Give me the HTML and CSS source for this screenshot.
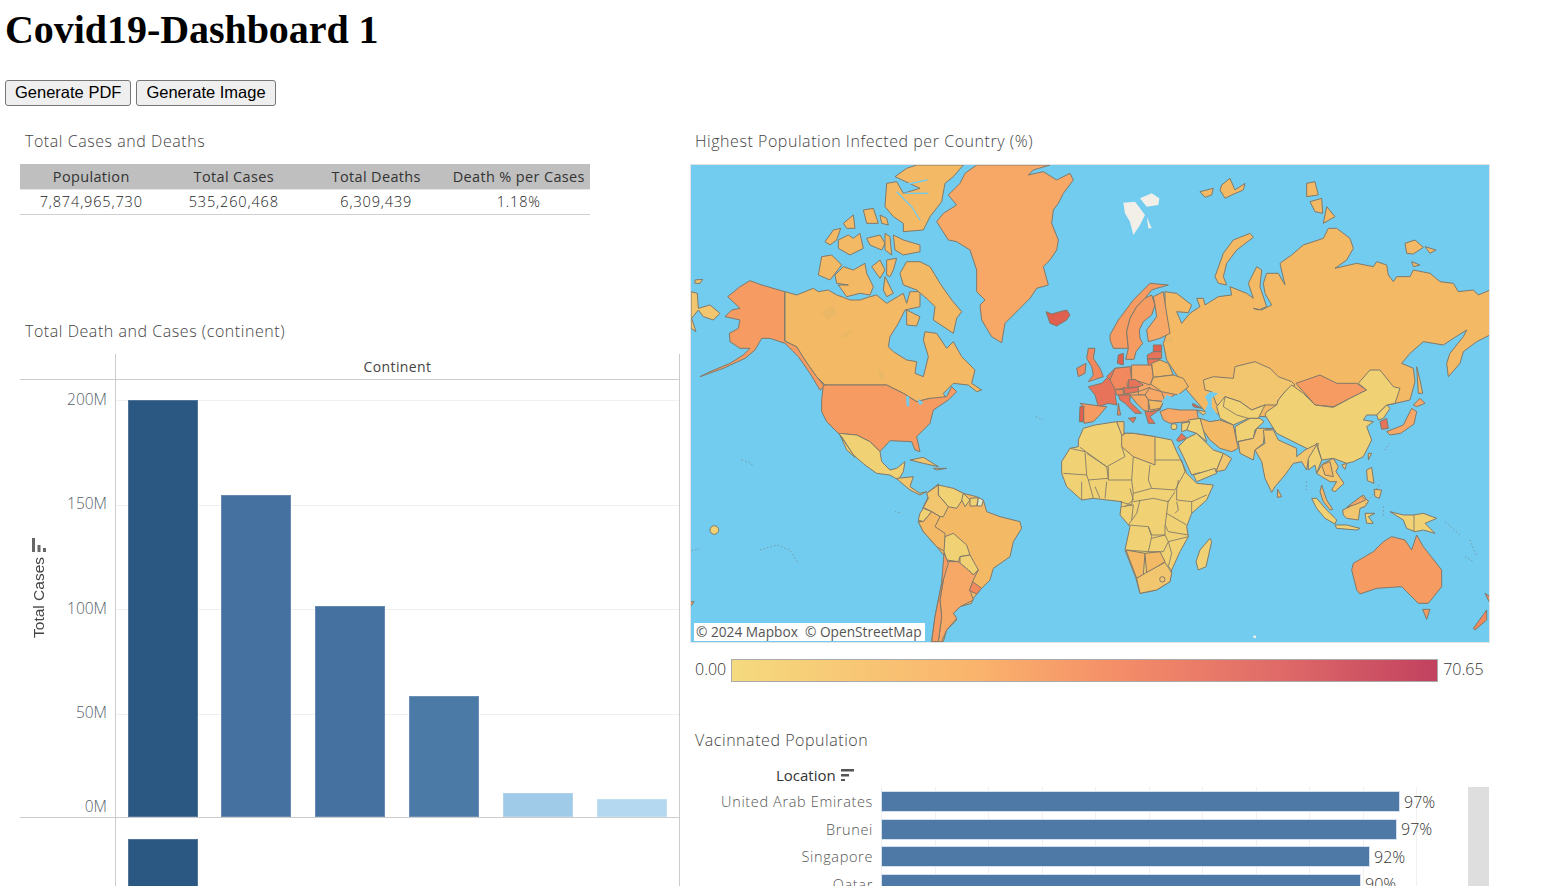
FILE: index.html
```html
<!DOCTYPE html>
<html lang="en">
<head>
<meta charset="utf-8">
<title>Covid19-Dashboard 1</title>
<link rel="stylesheet" href="styles.css">
</head>
<body>
<h1 class="page-title">Covid19-Dashboard 1</h1>
<div class="actions">
  <button class="btn" type="button">Generate PDF</button>
  <button class="btn" type="button">Generate Image</button>
</div>
<main class="dash">
  <section class="col-left">
    <h2 class="viz-title">Total Cases and Deaths</h2>
    <div class="kpi">
      <div class="kpi-row kpi-head"><span>Population</span><span>Total Cases</span><span>Total Deaths</span><span>Death % per Cases</span></div>
      <div class="kpi-row kpi-body"><span>7,874,965,730</span><span>535,260,468</span><span>6,309,439</span><span>1.18%</span></div>
    </div>
    <h2 class="viz-title title-chart">Total Death and Cases (continent)</h2>
    <div class="chart">
      <div class="chart-head"><div class="corner"></div><div class="continent">Continent</div></div>
      <div class="chart-row">
        <div class="axis">
          <div class="axis-title">
            <svg class="sort-v" viewBox="0 0 14 14" width="14" height="14"><rect x="0" y="0" width="3" height="14"/><rect x="5.500" y="7" width="3" height="7"/><rect x="11" y="10" width="3" height="4"/></svg>
            <span class="axis-label">Total Cases</span>
          </div>
          <div class="ticks">
            <div class="tick">200M</div><div class="tick">150M</div><div class="tick">100M</div><div class="tick">50M</div><div class="tick tick-zero">0M</div>
          </div>
        </div>
        <div class="plot">
          <div class="bar b-dark" style="height:417px"></div>
          <div class="bar b-mid" style="height:322px"></div>
          <div class="bar b-mid" style="height:211px"></div>
          <div class="bar b-mid2" style="height:121px"></div>
          <div class="bar b-light" style="height:24px"></div>
          <div class="bar b-light2" style="height:18px"></div>
        </div>
      </div>
      <div class="chart-row2">
        <div class="corner"></div>
        <div class="plot2"><div class="bar b-dark bar-tall"></div></div>
      </div>
    </div>
  </section>
  <section class="col-right">
    <h2 class="viz-title">Highest Population Infected per Country (%)</h2>
    <div class="map">
      <svg class="map-svg" viewBox="691 165 798 477" width="798" height="477" aria-label="World map">
        <!-- North Atlantic / Arctic -->
        <g transform="translate(690 160) scale(.33333)">
          <polygon class="t4" points="113,410 150,380 180,362 215,375 284,395 284,543 320,560 345,600 380,650 405,680 390,690 360,640 325,590 285,550 240,535 215,535 195,570 165,595 100,625 30,650 60,635 120,610 160,585 180,565 150,565 120,545 118,520 145,505 150,480 105,470 125,450 150,445"/>
          <polygon class="t2" points="285,395 320,405 345,395 370,385 385,395 415,390 440,405 460,412 480,420 510,420 540,410 560,405 590,430 615,415 640,400 650,430 660,395 690,395 690,440 645,450 625,490 600,530 595,560 610,575 650,600 680,605 675,640 700,650 715,590 700,540 705,515 740,520 770,565 790,545 815,590 855,630 845,670 875,690 860,695 835,675 790,670 760,700 770,720 720,715 680,725 640,700 590,675 405,675 380,650 345,600 320,560 285,543"/>
          <polygon class="lake" points="390,455 430,440 440,460 415,480"/>
          <polygon class="lake" points="445,530 490,505 470,530 450,535"/>
          <polygon class="lake" points="562,625 580,640 585,660 570,655"/>
          <polygon class="t2" points="630,340 650,305 690,305 720,320 750,370 785,420 815,455 800,475 790,520 730,480 735,440 715,420 680,390 640,375"/>
          <polygon class="t2" points="650,450 690,470 680,498 650,495"/>
          <polygon class="t2" points="435,345 460,320 490,330 525,310 530,340 550,380 540,405 510,400 470,410 445,375 475,375 440,370"/>
          <polygon class="t2" points="395,290 425,285 455,315 420,360 385,345"/>
          <polygon class="t2" points="545,320 570,300 585,330 570,355"/>
          <polygon class="t2" points="590,300 620,295 610,330 600,350 590,345"/>
          <polygon class="t2" points="610,225 640,240 690,255 690,275 640,285 615,270"/>
          <polygon class="t2" points="585,350 610,400 590,410 580,390"/>
          <polygon class="t2" points="405,245 430,210 452,205 440,240 420,255"/>
          <polygon class="t2" points="445,240 475,225 490,235 510,220 520,265 480,285 445,265"/>
          <polygon class="t2" points="530,235 570,225 585,250 575,270 540,255"/>
          <polygon class="t2" points="585,220 600,230 605,285 585,270"/>
          <polygon class="t2" points="520,150 550,145 565,190 530,190"/>
          <polygon class="t2" points="570,165 590,175 595,195 575,190"/>
          <polygon class="t2" points="460,190 490,165 495,205 470,205"/>
          <polygon class="t2" points="615,50 650,25 680,15 820,15 790,50 765,70 755,125 720,170 700,210 640,215 640,190 610,170 585,140 590,70 620,65 640,100 690,85"/>
          <polyline class="inlet" points="640,75 712,60"/>
          <polyline class="inlet" points="620,95 665,140 690,180"/>
          <polyline class="inlet" points="645,100 715,100"/>
          <polygon class="t3" points="860,15 1080,15 1030,30 1015,45 1060,35 1100,60 1140,40 1150,60 1120,100 1105,130 1090,150 1085,190 1105,240 1100,270 1080,300 1060,320 1075,375 1040,385 1020,415 990,445 945,490 935,548 905,530 875,480 870,435 885,420 860,395 860,330 840,270 800,245 775,240 740,185 760,160 800,135 775,105 810,70 825,40"/>
          <polygon class="t7" points="1068,455 1085,462 1110,455 1130,450 1140,465 1130,480 1100,498 1080,490 1075,475"/>
          <polygon class="t1" points="3,395 22,400 25,445 60,435 90,460 70,480 40,470 25,450 5,475 18,515 3,505"/>
          <polygon class="t1" points="15,360 38,358 30,370 15,370"/>
        </g>
        <!-- Americas south -->
        <g transform="translate(690 400) scale(.33333)">
          <polygon class="t4" points="400,-45 590,-45 640,-20 680,5 720,-5 770,-10 785,-40 800,-25 775,0 730,30 720,70 680,110 690,155 675,150 665,125 600,122 570,155 540,125 500,105 445,100 410,65 395,35 395,0"/>
          <polygon class="sea" points="648,-12 658,-10 658,20 650,18"/>
          <polygon class="sea" points="684,-4 700,8 690,16 685,8"/>
          <polygon class="t0" points="445,100 500,105 540,125 570,155 575,185 600,210 620,205 645,185 640,215 625,240 600,225 560,220 525,195 490,165 455,110"/>
          <polygon class="t0" points="450,105 470,135 495,172 470,150"/>
          <polygon class="t1" points="620,235 670,230 660,260 690,280 710,275 690,285 660,270 630,245"/>
          <polygon class="t1" points="660,180 700,172 745,200 700,190"/>
          <polygon class="t1" points="730,205 770,205 740,210"/>
          <polygon class="t2" points="710,280 745,252 745,270 790,265 820,280 860,290 880,300 890,335 930,350 990,365 995,385 970,425 960,470 910,505 900,540 870,570 850,595 845,610 810,620 790,640 800,660 770,690 760,725 725,725 735,650 755,550 765,470 740,440 700,395 685,365 695,340 700,320 715,290"/>
          <polygon class="t0" points="745,255 790,265 820,280 820,295 800,325 775,320 745,285"/>
          <polygon class="t1" points="710,280 745,255 745,285 775,320 760,350 750,350 725,335 700,322 715,295"/>
          <polygon class="t0" points="820,280 840,300 825,320 815,300"/>
          <polygon class="t0" points="840,295 865,293 860,318 840,318"/>
          <polygon class="guiana" points="865,293 880,300 875,318 862,318"/>
          <polygon class="t0" points="700,325 725,335 700,365 685,360 690,340"/>
          <polygon class="t2" points="725,335 750,350 735,380 765,400 765,455 740,440 700,395 685,365 700,365"/>
          <polygon class="t0" points="765,410 790,400 830,435 840,465 810,470 805,485 770,480 762,455"/>
          <polygon class="t0" points="810,470 840,465 865,510 850,525 835,510 810,490"/>
          <polygon class="t3" points="770,485 805,485 835,510 850,525 865,510 850,540 840,570 850,600 810,620 790,640 800,655 770,690 755,725 745,725 755,650 750,600 760,540"/>
          <polygon class="t4" points="762,458 775,490 760,540 750,600 755,650 745,725 725,725 735,650 755,550"/>
          <polygon class="t5" points="848,545 875,565 860,582 838,572"/>
          <circle class="t0" cx="73" cy="390" r="13"/>
          <polyline class="speck" points="155,180 185,190 187,200"/>
          <polyline class="speck" points="615,335 630,338"/>
          <polyline class="speck" points="5,452 28,446"/>
          <polyline class="speck" points="1038,50 1060,60"/>
          <polyline class="speck" points="210,450 260,435 300,450 325,490"/>
          <polygon class="t4" points="0,605 12,605 0,622"/>
        </g>
        <!-- Russia and Arctic Eurasia -->
        <g transform="translate(1090 160) scale(.33333)">
          <polygon class="ice" points="100,128 135,125 150,145 165,165 150,195 130,225 120,185 105,160"/>
          <polygon class="ice" points="150,115 185,100 208,115 205,135 170,140"/>
          <polygon class="ice" points="170,170 185,205 175,205"/>
          <polygon class="t2" points="330,95 370,85 365,105 345,112"/>
          <polygon class="t2" points="395,75 420,55 435,90 465,70 460,90 425,105 405,115 390,90"/>
          <polygon class="t2" points="375,350 400,280 430,240 480,220 490,232 440,270 410,310 400,350 410,375 385,370"/>
          <polygon class="t2" points="650,70 675,65 685,105 650,110"/>
          <polygon class="t2" points="660,125 695,115 698,160 675,155"/>
          <polygon class="t2" points="710,140 735,170 700,190"/>
          <polygon class="t2" points="945,250 975,240 1000,262 970,282 950,280"/>
          <polygon class="t2" points="1005,260 1038,270 1020,280"/>
          <polygon class="t2" points="965,305 990,315 970,320"/>
          <polygon class="t2" points="225,395 260,400 305,435 295,458 260,455 275,490 300,460 330,440 320,415 340,415 345,435 385,410 425,405 420,380 470,400 490,415 475,370 500,320 515,330 510,380 530,440 505,450 490,445 515,450 545,435 525,400 520,370 530,340 565,340 585,375 570,310 605,285 640,255 700,235 715,205 740,205 780,235 790,265 770,300 735,325 800,310 850,320 860,305 890,315 895,345 910,365 920,350 960,350 970,330 1020,340 1050,365 1090,370 1105,395 1150,390 1165,405 1200,390 1200,525 1160,545 1120,575 1110,610 1075,650 1070,610 1080,580 1120,530 1130,510 1090,535 1060,555 1000,545 960,580 935,610 970,625 975,665 960,720 700,780 350,760 290,690 230,600 220,550 235,505 225,440"/>
          <polygon class="t2" points="980,620 990,660 998,700 985,700"/>
          <polygon class="lake" points="225,540 250,530 245,548 228,550"/>
        </g>
        <!-- Europe -->
        <g transform="translate(1060 280) scale(.33333)">
          <polygon class="t3" points="150,300 165,265 275,255 385,320 310,365 300,390 265,395 230,370 210,345 175,345"/>
          <polygon class="t4" points="150,165 175,120 220,60 270,10 325,15 290,25 275,30 255,55 230,80 210,115 200,155 205,205 185,205 160,205 150,180"/>
          <polygon class="t4" points="205,205 200,155 210,115 230,80 255,55 275,45 285,75 275,105 250,125 238,150 240,175 248,190 228,215 222,238 197,238"/>
          <polygon class="t3" points="280,50 310,35 315,70 330,160 300,175 265,185 260,150 290,110 285,75"/>
          <polygon class="t7" points="175,225 190,220 190,255 172,250"/>
          <polygon class="t7" points="280,195 305,195 305,215 280,215"/>
          <polygon class="t6" points="262,225 280,215 305,215 305,235 262,237"/>
          <polygon class="t6" points="262,237 300,237 290,260 265,255"/>
          <polygon class="t5" points="85,205 105,205 100,235 120,265 130,290 100,300 85,305 100,285 95,260 80,235"/>
          <polygon class="t5" points="50,265 78,250 75,280 55,290"/>
          <polygon class="t6" points="85,320 125,310 150,285 185,325 165,340 170,375 145,370 115,380 105,345"/>
          <polygon class="t4" points="60,370 120,378 140,380 115,410 100,425 72,430 70,380"/>
          <polygon class="t7" points="60,380 72,378 70,425 58,425"/>
          <polygon class="t6" points="140,290 165,265 168,295 150,300"/>
          <polygon class="t5" points="165,265 210,260 215,300 200,310 205,325 165,328 150,300"/>
          <polygon class="t3" points="215,255 275,255 280,290 270,315 225,300 215,300"/>
          <polygon class="t2" points="275,250 300,240 325,250 340,285 280,292"/>
          <polygon class="t2" points="272,312 280,292 340,285 370,295 385,320 355,345 330,340 305,335"/>
          <polygon class="t6" points="205,300 225,298 250,315 230,322 205,322"/>
          <polygon class="t6" points="190,322 205,325 235,320 235,335 195,342"/>
          <polygon class="t5" points="165,330 190,328 190,345 170,345"/>
          <polygon class="t3" points="235,335 270,322 265,345 235,345"/>
          <polygon class="t3" points="268,325 305,335 315,365 265,360 255,345"/>
          <polygon class="t6" points="175,345 210,345 210,365 245,400 225,400 195,370 180,360"/>
          <polygon class="t6" points="205,415 228,412 220,428"/>
          <polygon class="t5" points="175,370 182,405 172,405"/>
          <polygon class="t3" points="210,345 235,345 255,345 265,360 265,395 250,390 230,370"/>
          <polygon class="t2" points="265,360 310,365 300,385 270,390"/>
          <polygon class="t6" points="255,395 275,395 300,388 270,410 285,430 265,430"/>
          <polygon class="t3" points="300,395 325,385 360,390 410,390 415,415 380,425 330,430 310,420"/>
          <polygon class="t7" points="395,368 425,385 400,380"/>
          <polygon class="t1" points="410,390 440,395 430,405"/>
          <polygon class="sea" points="305,365 320,345 345,355 355,340 385,355 400,370 360,385 320,385"/>
        </g>
        <!-- Asia -->
        <g transform="translate(1190 350) scale(.33333)">
          <polygon class="t1" points="40,90 70,80 130,85 135,50 195,35 240,55 265,80 305,95 315,105 285,125 265,150 260,165 225,165 185,180 150,155 105,140 100,170 80,165 65,125 45,120"/>
          <polygon class="t4" points="318,100 390,75 440,100 500,100 530,120 480,145 430,170 375,165 340,125"/>
          <polygon class="t0" points="265,150 285,125 305,105 340,130 375,165 430,172 480,145 530,120 505,100 540,60 570,60 610,110 630,115 615,160 590,165 560,195 530,195 520,210 550,215 530,230 545,270 520,320 490,335 470,340 430,325 395,330 380,280 360,300 300,270 260,250 225,195 230,185 260,165"/>
          <polygon class="t0" points="80,170 105,140 150,155 185,180 225,165 205,205 175,205 130,225 90,205"/>
          <polyline class="b" points="105,140 100,170 140,195 175,205"/>
          <polygon class="sea" points="60,125 85,130 65,145 65,170 90,205 75,220 55,210 45,180 55,160 45,140"/>
          <polygon class="t0" points="135,230 180,205 210,205 222,215 195,240 190,265 140,275"/>
          <polygon class="t1" points="145,275 190,265 200,235 250,235 225,240 220,280 195,300 190,330 150,310"/>
          <polygon class="t2" points="30,205 60,215 90,210 130,225 140,275 145,295 125,305 90,295 60,270 35,235"/>
          <polygon class="t1" points="195,300 225,280 220,240 250,240 265,270 320,295 320,320 345,300 385,280 380,310 355,330 350,360 335,335 310,340 285,375 255,410 245,427 225,385 215,335"/>
          <polygon class="t2" points="263,418 275,440 262,442"/>
          <polygon class="t0" points="355,325 380,285 395,330 380,370 375,345 355,360"/>
          <polygon class="t1" points="380,370 395,345 400,340 430,325 445,350 438,365 462,400 435,425 425,420 440,395 420,395 395,380"/>
          <polygon class="t2" points="395,345 420,335 430,380 405,375"/>
          <polygon class="t2" points="395,405 410,450 428,478 420,480 400,455 390,425"/>
          <polygon class="t6" points="570,215 590,205 595,235 575,238"/>
          <polygon class="t0" points="560,195 590,165 600,175 580,205 565,210"/>
          <polygon class="t3" points="590,245 640,225 665,175 680,185 672,222 632,250 600,255"/>
          <polygon class="t3" points="670,165 690,145 705,160 680,170"/>
          <polygon class="t1" points="535,310 545,310 535,330"/>
          <polygon class="t1" points="455,345 470,340 465,358"/>
          <polygon class="t1" points="530,360 545,352 552,400 532,392"/>
          <polygon class="t1" points="552,418 575,420 568,445 555,440"/>
          <polygon class="t0" points="365,445 380,445 410,480 440,510 435,522 405,505 380,475"/>
          <polygon class="t0" points="435,525 470,525 510,535 500,540 440,535"/>
          <polygon class="t1" points="458,480 480,470 500,450 520,435 535,455 525,470 510,475 505,510 470,505 460,495"/>
          <polygon class="t3" points="470,472 515,438 527,450 500,462"/>
          <polygon class="t0" points="525,490 555,490 535,500 550,520 530,520"/>
          <polyline class="speck" points="350,395 348,420"/>
          <polyline class="speck" points="520,470 545,440 570,400"/>
          <polyline class="speck" points="580,470 580,500"/>
          <polyline class="speck" points="600,280 580,305"/>
        </g>
        <!-- Africa and Arabia -->
        <g transform="translate(1050 410) scale(.33333)">
          <polygon class="t0" points="85,90 100,55 135,45 200,35 215,70 250,70 315,80 365,90 380,125 400,165 410,190 440,220 490,225 470,270 425,310 410,350 415,380 390,425 365,480 360,515 320,540 270,550 258,505 225,420 240,350 210,315 215,275 130,265 95,270 50,230 35,190 35,155 60,115 85,110"/>
          <polygon class="t1" points="215,70 250,70 315,80 315,165 250,140 215,110"/>
          <polygon class="t1" points="200,35 222,35 222,75 215,75"/>
          <polygon class="t2" points="228,420 285,430 280,495 260,505"/>
          <polygon class="t2" points="285,430 330,425 345,455 290,490"/>
          <polygon class="t1" points="260,505 285,490 345,457 360,480 365,490 360,515 320,540 270,550"/>
          <circle class="t1" cx="337" cy="508" r="8"/>
          <polyline class="b" points="90,112 170,170 225,140 215,110"/>
          <polyline class="b" points="60,115 105,125 110,195 40,190"/>
          <polyline class="b" points="110,130 170,170 175,205 115,210 110,195"/>
          <polyline class="b" points="175,170 175,210 245,210 250,140"/>
          <polyline class="b" points="300,165 295,210 305,235 250,250 245,210"/>
          <polyline class="b" points="315,150 395,150 405,185 375,240 305,235"/>
          <polyline class="b" points="385,210 380,240 380,270 425,275 470,255"/>
          <polyline class="b" points="375,245 355,275 310,265 250,275"/>
          <polyline class="b" points="250,250 245,285 210,275"/>
          <polyline class="b" points="270,270 260,310 235,345 295,350 305,375 345,375 345,350 355,270"/>
          <polyline class="b" points="295,350 305,380 295,425 228,420"/>
          <polyline class="b" points="305,385 345,375 355,395 340,425 295,425"/>
          <polyline class="b" points="355,395 415,380"/>
          <polyline class="b" points="355,395 365,430 355,470 365,480"/>
          <polyline class="b" points="345,345 355,365 415,375"/>
          <polyline class="b" points="350,310 410,345"/>
          <polyline class="b" points="380,275 385,300 375,310"/>
          <polyline class="b" points="425,275 425,310"/>
          <polyline class="b" points="170,215 165,265"/>
          <polyline class="b" points="115,210 130,265"/>
          <polyline class="b" points="95,215 95,270"/>
          <polyline class="b" points="240,235 250,270 225,290"/>
          <polyline class="b" points="215,290 250,285 245,330"/>
          <polyline class="b" points="135,230 150,265"/>
          <polygon class="t0" points="385,110 410,85 440,70 470,100 490,120 520,130 500,180 440,190 425,195 400,140"/>
          <polygon class="t0" points="430,195 495,175 500,190 440,215"/>
          <polygon class="t1" points="520,130 545,145 525,180 498,185 510,155"/>
          <polygon class="t0" points="415,30 450,25 470,95 440,70 410,60"/>
          <polygon class="t0" points="395,40 420,35 410,60 395,65"/>
          <polygon class="t6" points="380,90 395,70 410,85 385,95"/>
          <circle class="t0" cx="372" cy="50" r="9"/>
          <polygon class="t0" points="480,385 485,395 468,470 445,480 438,455 450,420"/>
        </g>
        <!-- Oceania -->
        <g transform="translate(1090 400) scale(.33333)">
          <polygon class="t0" points="900,335 940,345 970,345 1000,340 1040,355 1005,370 1035,400 1000,390 975,395 950,385 940,360"/>
          <polyline class="b" points="972,345 972,395"/>
          <polygon class="t4" points="790,490 850,455 880,425 905,410 945,420 965,450 980,405 1000,440 1055,510 1055,560 1015,610 985,610 950,575 935,560 860,565 810,582 800,570 785,510"/>
          <polygon class="t4" points="998,628 1020,628 1010,658"/>
          <polygon class="t5" points="1150,685 1190,630 1190,660 1155,690"/>
          <polygon class="t5" points="1185,580 1200,590 1200,610"/>
          <polygon class="ice" points="490,707 498,707 498,714 490,714"/>
          <polyline class="speck" points="1065,365 1110,405"/>
          <polyline class="speck" points="1140,420 1160,470"/>
          <polyline class="speck" points="1125,470 1150,485"/>
        </g>
      </svg>
      <div class="attrib">© 2024 Mapbox&nbsp; © OpenStreetMap</div>
    </div>
    <div class="legend">
      <span class="legend-val">0.00</span>
      <div class="legend-bar"></div>
      <span class="legend-val">70.65</span>
    </div>
    <h2 class="viz-title title-vacc">Vacinnated Population</h2>
    <div class="vacc">
      <div class="vacc-head">
        <span class="vacc-field">Location</span>
        <svg class="sort-h" viewBox="0 0 13 12" width="13" height="12"><rect x="0" y="0" width="13" height="2.500"/><rect x="0" y="5" width="8" height="2.500"/><rect x="0" y="10" width="4" height="2"/></svg>
      </div>
      <div class="vacc-body">
        <div class="vacc-labels">
          <div class="vacc-label">United Arab Emirates</div>
          <div class="vacc-label">Brunei</div>
          <div class="vacc-label">Singapore</div>
          <div class="vacc-label">Qatar</div>
        </div>
        <div class="vacc-bars">
          <div class="vacc-row"><div class="vbar" style="width:519px"></div><span class="vval">97%</span></div>
          <div class="vacc-row"><div class="vbar" style="width:516px"></div><span class="vval">97%</span></div>
          <div class="vacc-row"><div class="vbar" style="width:489px"></div><span class="vval">92%</span></div>
          <div class="vacc-row"><div class="vbar" style="width:480px"></div><span class="vval">90%</span></div>
        </div>
        <div class="scroll"></div>
      </div>
    </div>
  </section>
</main>
</body>
</html>
```
FILE: styles.css
```css
html, body { margin: 0; padding: 0; height: 886px; overflow: hidden; background: #fff; }
body { padding-left: 5px; font-family: "Liberation Serif", serif; color: #000; box-sizing: border-box; }

.page-title { margin: 7px 0 27px; font: bold 40px/46px "Liberation Serif", serif; letter-spacing: -.05px; }

.actions { display: flex; gap: 5px; height: 26px; }
.btn {
  height: 26px; padding: 0 9px 2px; background: #efefef; color: #000;
  border: 1px solid #767676; border-radius: 3px;
  font: 16.5px "Liberation Sans", sans-serif;
}

.dash { display: flex; padding-left: 15px; margin-top: 24px; }
.col-left { width: 660px; margin-right: 10px; flex: none; }
.col-right { width: 800px; flex: none; }

.viz-title {
  margin: 0; height: 34px; padding-left: 5px; box-sizing: border-box;
  font: 300 16px/22px "Open Sans", sans-serif; letter-spacing: .55px; color: #444;
}

.kpi { width: 570px; }
.kpi-row { display: grid; grid-template-columns: repeat(4, 1fr); text-align: center; font: 300 14.5px "Open Sans", sans-serif; }
.kpi-row span { white-space: nowrap; }
.kpi-head { height: 26px; line-height: 26px; background: #bfbfbf; color: #333; letter-spacing: .35px; border-bottom: 1px solid #e6e6e6; box-sizing: border-box; font-weight: 400; }
.kpi-body { height: 25px; line-height: 24px; color: #222; letter-spacing: .85px; border-bottom: 1px solid #d0d0d0; box-sizing: border-box; }

.title-chart { margin-top: 105px; }

.chart { width: 660px; border-right: 1px solid #ccc; box-sizing: border-box; }
.chart-head { display: flex; height: 26px; border-bottom: 1px solid #ccc; box-sizing: border-box; }
.corner { width: 95px; flex: none; }
.continent { flex: 1; border-left: 1px solid #ccc; text-align: center; font: 14px/25px "Open Sans", sans-serif; letter-spacing: .4px; color: #444; }

.chart-row { display: flex; height: 438px; border-bottom: 1px solid #ccc; box-sizing: border-box; }
.axis { width: 95px; flex: none; display: flex; }
.axis-title { width: 28px; padding-left: 10px; box-sizing: border-box; display: flex; flex-direction: column; align-items: center; justify-content: center; gap: 5px; padding-bottom: 22px; }
.sort-v { fill: #666; }
.axis-label { writing-mode: vertical-rl; transform: rotate(180deg); font: 15.5px "Liberation Sans", sans-serif; color: #444; }
.ticks { flex: 1; padding: 9px 8px 0 0; text-align: right; font: 300 15.5px/20px "Open Sans", sans-serif; color: #555e68; }
.tick { height: 104.3px; }
.tick-zero { margin-top: -10px; height: 20px; }

.plot {
  flex: 1; display: flex; align-items: flex-end; gap: 23.8px; padding-left: 11.6px;
  border-left: 1px solid #ccc;
  background: repeating-linear-gradient(to bottom, #f0f0f0 0, #f0f0f0 1px, transparent 1px, transparent 104.5px) 0 20px / 100% 100% no-repeat;
}
.bar { width: 70px; flex: none; box-shadow: inset 0 0 0 1px rgba(255,255,255,.18); }
.b-dark { background: #2b5783; }
.b-mid { background: #44719f; }
.b-mid2 { background: #4b7aa6; }
.b-light { background: #a0cbe8; }
.b-light2 { background: #b4d8ef; }

.chart-row2 { display: flex; height: 100px; }
.plot2 { flex: 1; padding: 21px 0 0 11.6px; border-left: 1px solid #ccc; box-sizing: border-box; }
.bar-tall { height: 200px; }

.map { position: relative; width: 800px; height: 479px; border: 1px solid #e3e3e3; box-sizing: border-box; background: #71ccf0; overflow: hidden; }
.map-svg { display: block; filter: blur(.35px); }
.map-svg polygon, .map-svg circle { stroke: #7f7869; stroke-width: 3; stroke-linejoin: round; }
.map-svg .sea, .map-svg .ice, .map-svg .lake { stroke: none; }
.map-svg .b { fill: none; stroke: #7f7869; stroke-width: 2.6; stroke-linejoin: round; }
.map-svg .inlet { fill: none; stroke: #71ccf0; stroke-width: 4; }
.map-svg .speck { fill: none; stroke: #7f7869; stroke-width: 2; stroke-dasharray: 4 7; }
.t0 { fill: #f0d274; }
.t1 { fill: #f2c56f; }
.t2 { fill: #f4b964; }
.t3 { fill: #f7a867; }
.t4 { fill: #f69b62; }
.t5 { fill: #f1885e; }
.t6 { fill: #e8735b; }
.t7 { fill: #e0604f; }
.guiana { fill: #e4ebc8; }
.ice { fill: #f2efe9; }
.lake { fill: #eab766; }
.sea { fill: #71ccf0; }

.attrib {
  position: absolute; left: 3px; bottom: 1px; height: 18px; padding: 0 3px 0 2px;
  background: #fff; color: #555; white-space: nowrap;
  font: 13.7px/18px "Open Sans", sans-serif;
}

.legend { display: flex; align-items: center; height: 23px; margin-top: 16px; padding-left: 5px; gap: 5px; }
.legend-val { font: 300 16px "Open Sans", sans-serif; color: #333; padding-bottom: 3px; }
.legend-bar {
  width: 707px; height: 23px; box-sizing: border-box; border: 1px solid #aaa;
  background: linear-gradient(to right, #f5da7e 0%, #fab36c 35%, #f48d68 55%, #df6a68 78%, #c1415f 100%);
}

.title-vacc { margin-top: 47px; height: 41px; }

.vacc-head { display: flex; justify-content: flex-start; align-items: center; padding-left: 86px; gap: 5px; height: 14px; font: 15px "Open Sans", sans-serif; color: #333; }
.vacc-field { line-height: 14px; margin-bottom: 4px; }
.sort-h { fill: #555; margin-bottom: 5px; }

.vacc-body { display: flex; margin-top: 3px; height: 100px; overflow: hidden; }
.vacc-labels { width: 183px; flex: none; padding-top: 4px; }
.vacc-label { height: 27.6px; text-align: right; font: 300 14.5px/21px "Open Sans", sans-serif; letter-spacing: .65px; color: #555; }
.vacc-bars {
  width: 587px; flex: none; margin-left: 8px; padding-top: 4px; box-sizing: border-box;
  background: repeating-linear-gradient(to right, #f0f0f0 0, #f0f0f0 1px, transparent 1px, transparent 53.500px) 0 0;
}
.vacc-row { display: flex; align-items: center; height: 21px; margin-bottom: 6.600px; gap: 4px; }
.vbar { height: 21px; background: #4e79a7; box-shadow: 0 0 0 1px #d4e0ec inset; flex: none; }
.vval { font: 300 16px "Open Sans", sans-serif; color: #333; }
.scroll { width: 21px; flex: none; background: #dedede; }
```
